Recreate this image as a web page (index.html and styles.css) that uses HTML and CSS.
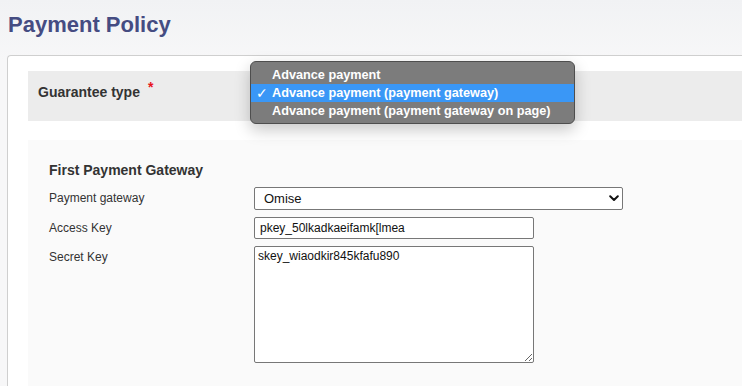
FILE: index.html
```html
<!DOCTYPE html>
<html lang="en">
  <head>
    <meta charset="UTF-8" />
    <link rel="stylesheet" href="styles.css">
  </head>
  <body>
    <h1 class="page-title">Payment Policy</h1>

    <div class="card">
      <div class="field-band">
        <span class="band-label">Guarantee type</span>
        <span class="required">*</span>
      </div>

      <div class="gateway-panel">
        <h3 class="panel-title">First Payment Gateway</h3>
        <div class="form-grid">
          <label for="gateway">Payment gateway</label>
          <div class="select-wrap">
            <select id="gateway" class="form-select">
              <option>Omise</option>
            </select>
            <svg class="chevron" width="10" height="7" viewBox="0 0 10 7">
              <path d="M1.2 1.3 L5 5 L8.8 1.3" fill="none" stroke="#111" stroke-width="2" stroke-linecap="round" stroke-linejoin="round"/>
            </svg>
          </div>

          <label for="access">Access Key</label>
          <input type="text" id="access" class="form-input" value="pkey_50lkadkaeifamk[lmea" />

          <label for="secret">Secret Key</label>
          <textarea id="secret" class="form-textarea">skey_wiaodkir845kfafu890</textarea>
        </div>
      </div>
    </div>

    <!-- open dropdown of the guarantee type select -->
    <ul class="dropdown-menu">
      <li class="menu-item">Advance payment</li>
      <li class="menu-item selected"><span class="check">✓</span>Advance payment (payment gateway)</li>
      <li class="menu-item">Advance payment (payment gateway on page)</li>
    </ul>
  </body>
</html>
```

FILE: styles.css
```css
:root {
  --label-color: #333;
  --control-border: #777;
  --band-bg: #ececec;
  --panel-bg: #fafafa;
}

html, body {
  height: 100%;
}

body {
  margin: 0;
  display: flex;
  flex-direction: column;
  overflow: hidden;
  font-family: "Liberation Sans", Arial, sans-serif;
  color: var(--label-color);
  background: linear-gradient(to bottom, #f1f2f4 0, #f7f7f8 60px, #f7f7f8 100%);
}

.page-title {
  margin: 0;
  padding: 12px 8px 0;
  font-size: 22px;
  line-height: 26px;
  font-weight: bold;
  color: #454c82;
}

.card {
  flex: 1;
  display: flex;
  flex-direction: column;
  margin: 17px 0 0 7px;
  padding: 15px 0 0 20px;
  background: #fff;
  border: 1px solid #cfcfcf;
  border-right: none;
  border-bottom: none;
  border-radius: 4px 0 0 0;
}

.field-band {
  display: flex;
  align-items: flex-start;
  height: 50px;
  padding: 13px 0 0 10px;
  box-sizing: border-box;
  background: var(--band-bg);
}

.band-label {
  font-size: 14px;
  line-height: 16px;
  font-weight: bold;
  color: #333;
}

.required {
  margin: -5px 0 0 8px;
  font-size: 14px;
  line-height: 16px;
  font-weight: bold;
  color: #e8141c;
}

.gateway-panel {
  flex: 1;
  margin-top: 19px;
  padding: 22px 0 0 21px;
  background: var(--panel-bg);
}

.panel-title {
  margin: 0 0 9px;
  font-size: 14px;
  line-height: 16px;
  font-weight: bold;
  color: #333;
}

.form-grid {
  display: grid;
  grid-template-columns: 205px auto;
  row-gap: 7px;
  align-items: start;
  justify-items: start;
}

.form-grid label {
  padding-top: 1px;
  font-size: 12px;
  line-height: 21px;
  color: var(--label-color);
}

.select-wrap {
  position: relative;
}

.form-select {
  appearance: none;
  -webkit-appearance: none;
  display: block;
  width: 369px;
  height: 23px;
  margin: 0;
  padding: 0 0 0 9px;
  font-family: inherit;
  font-size: 13px;
  color: #111;
  background: #fff;
  border: 1px solid var(--control-border);
  border-radius: 2px;
  outline: none;
}

.chevron {
  position: absolute;
  top: 8px;
  right: 4px;
}

.form-input,
.form-textarea {
  display: block;
  width: 280px;
  margin: 0;
  font-family: inherit;
  font-size: 12px;
  color: #111;
  background: #fff;
  border: 1px solid var(--control-border);
  border-radius: 2px;
  outline: none;
  box-sizing: border-box;
}

.form-input {
  height: 22px;
  padding: 0 5px;
}

.form-textarea {
  height: 117px;
  padding: 2px 3px;
  resize: both;
  line-height: 14px;
}

.dropdown-menu {
  position: absolute;
  left: 250px;
  top: 61px;
  width: 325px;
  margin: 0;
  padding: 4px 0 3px;
  list-style: none;
  box-sizing: border-box;
  background: #7c7c7c;
  border: 1px solid #4e4e4e;
  border-radius: 6px;
  box-shadow: 0 6px 16px rgba(0, 0, 0, 0.22);
}

.menu-item {
  position: relative;
  height: 18px;
  padding-left: 21px;
  font-size: 12.7px;
  font-weight: bold;
  line-height: 18px;
  color: #fff;
  white-space: nowrap;
}

.menu-item.selected {
  background: #3a97f6;
}

.check {
  position: absolute;
  left: 5px;
  top: 0;
  font-weight: bold;
  font-family: "DejaVu Sans", sans-serif;
  font-size: 14px;
}
```
